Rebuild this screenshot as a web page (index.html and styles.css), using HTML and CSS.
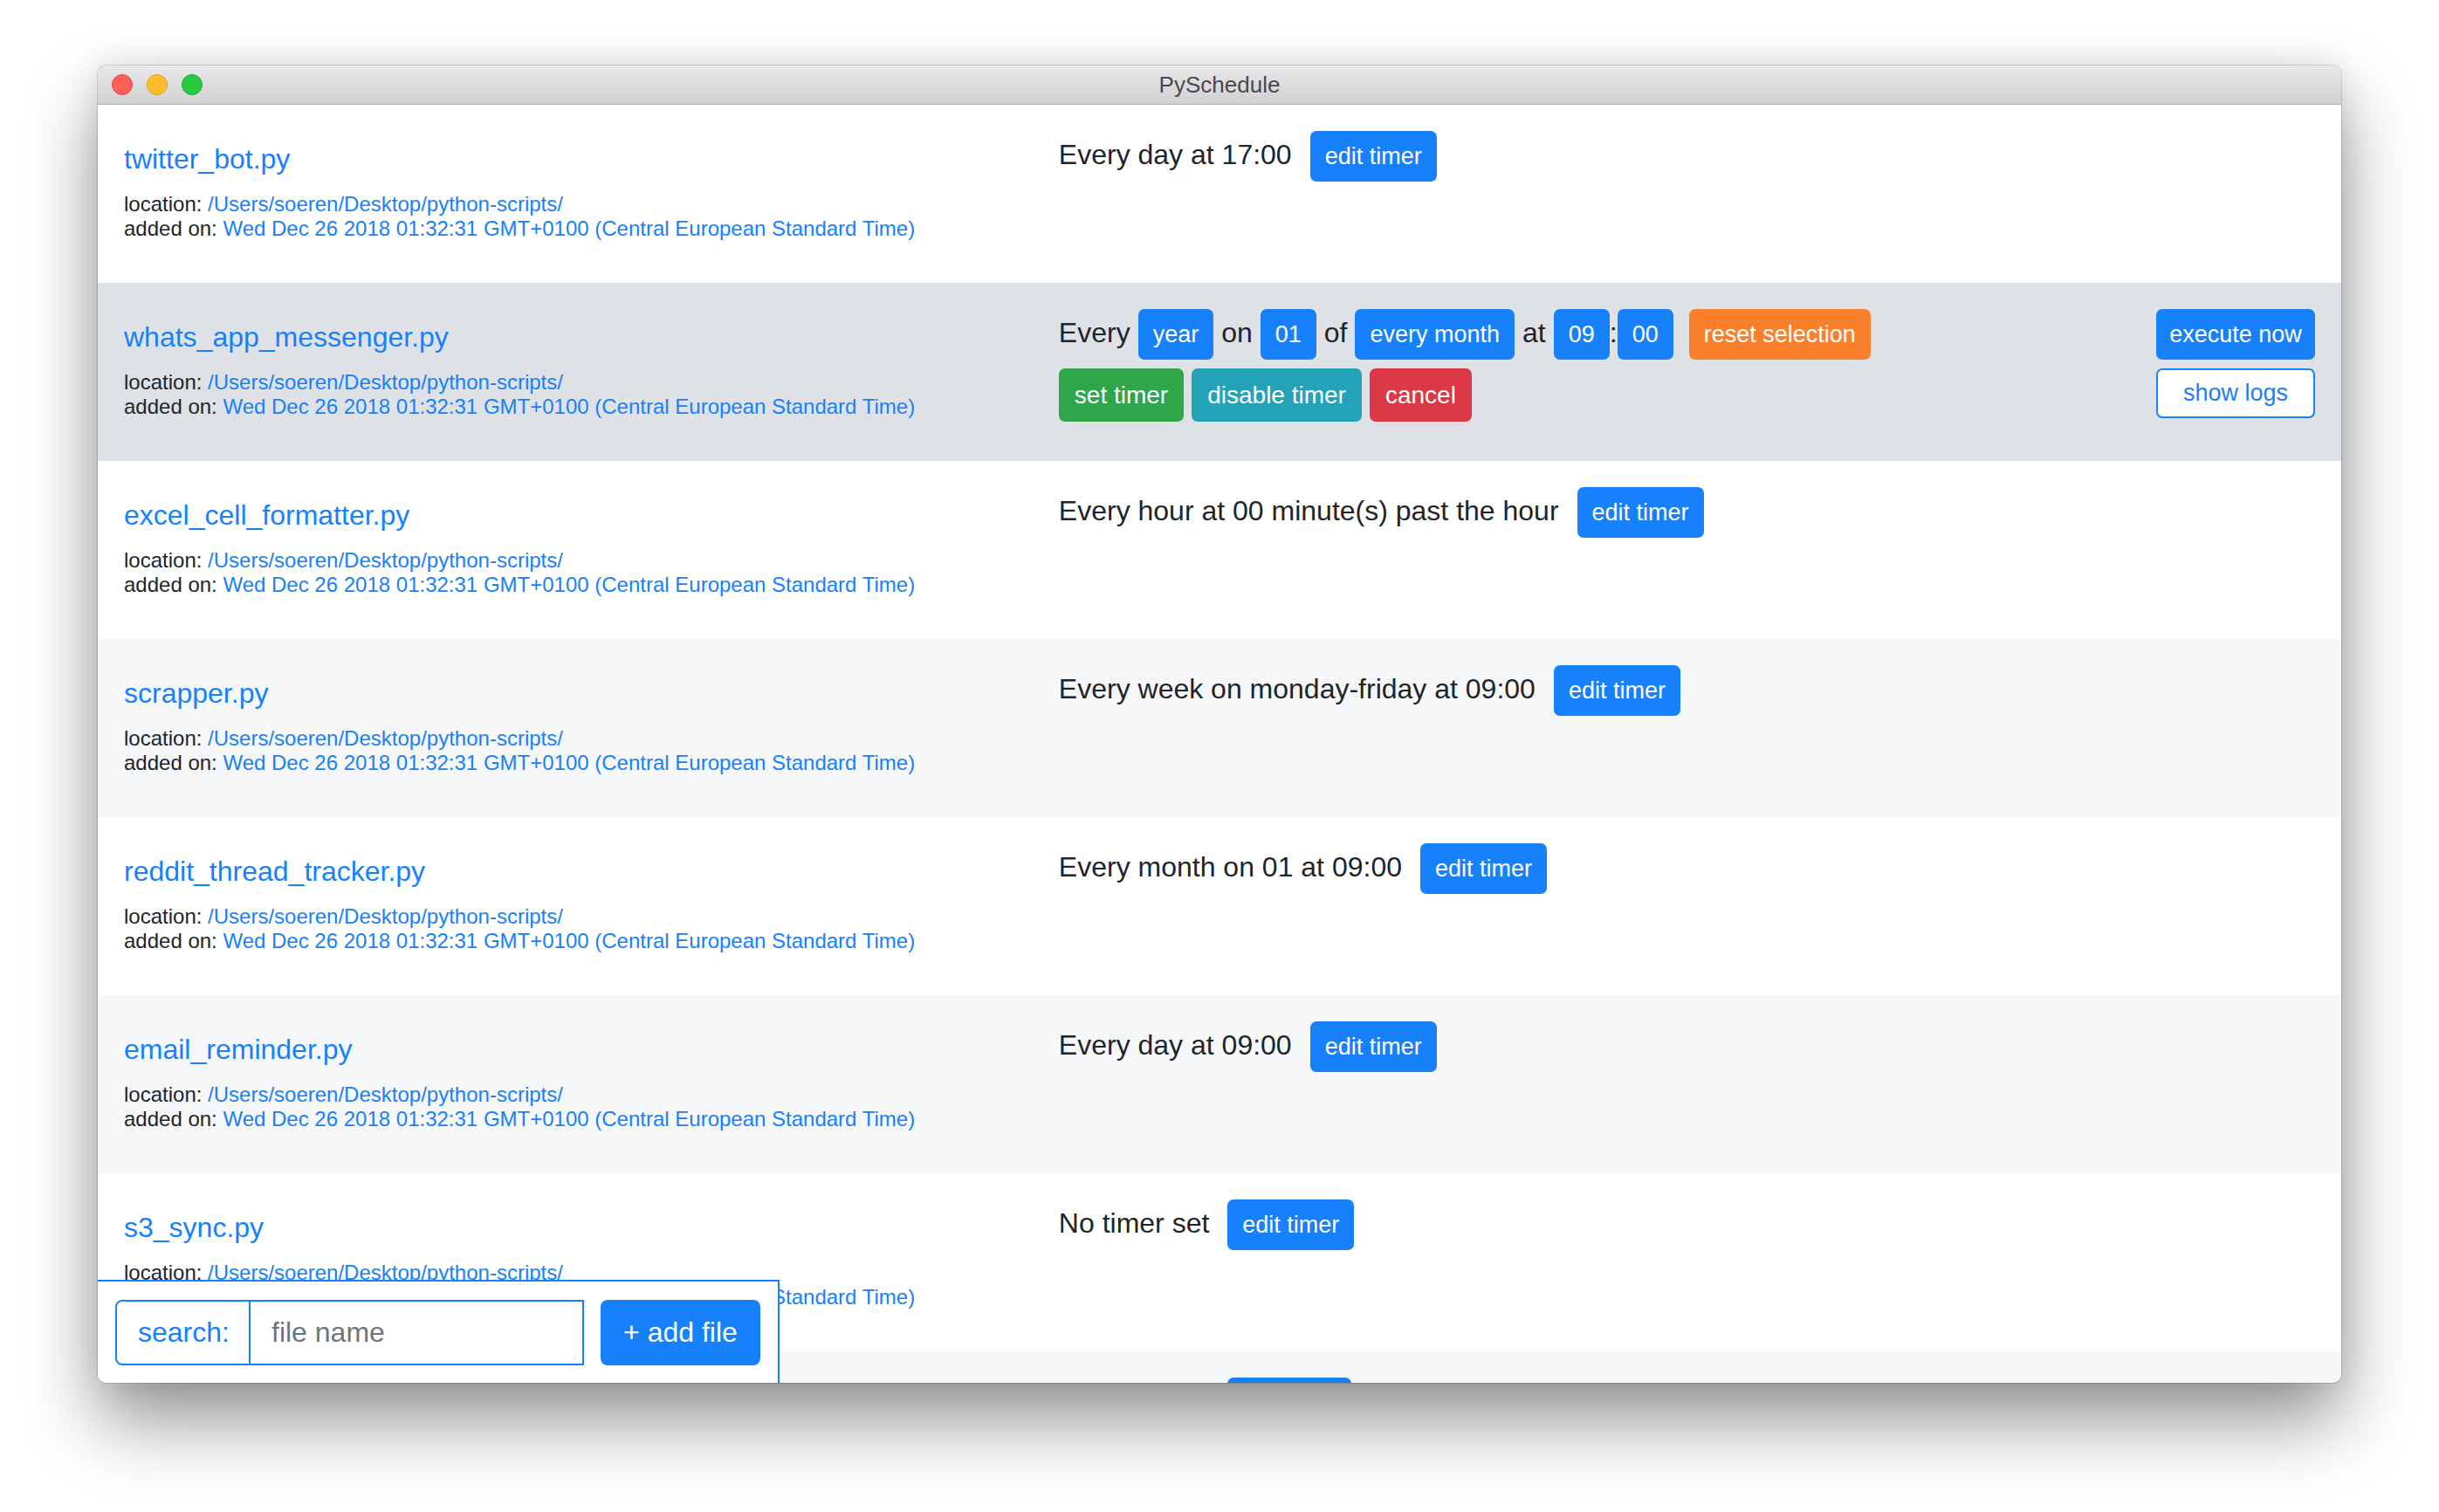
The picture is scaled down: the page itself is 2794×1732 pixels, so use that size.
FILE: index.html
```html
<html>
<head>
<link rel="stylesheet" href="styles.css">
</head>
<body>
<div class="page">
<div class="window">
  <div class="titlebar">
    <div class="lights">
      <span class="light light-close"></span>
      <span class="light light-min"></span>
      <span class="light light-max"></span>
    </div>
    <div class="title">PySchedule</div>
    <div></div>
  </div>

  <div class="content">
    <div class="file-list">

      <div class="file-row">
        <div class="file-info">
          <a class="file-name" href="#">twitter_bot.py</a>
          <div class="meta">location: <a href="#">/Users/soeren/Desktop/python-scripts/</a></div>
          <div class="meta">added on: <a href="#">Wed Dec 26 2018 01:32:31 GMT+0100 (Central European Standard Time)</a></div>
        </div>
        <div class="timer-col">
          <div class="timer-line simple">
            <span>Every day at 17:00</span>
            <button class="btn btn-primary">edit timer</button>
          </div>
        </div>
      </div>

      <div class="file-row active">
        <div class="file-info">
          <a class="file-name" href="#">whats_app_messenger.py</a>
          <div class="meta">location: <a href="#">/Users/soeren/Desktop/python-scripts/</a></div>
          <div class="meta">added on: <a href="#">Wed Dec 26 2018 01:32:31 GMT+0100 (Central European Standard Time)</a></div>
        </div>
        <div class="timer-col">
          <div class="timer">
            <div class="timer-line editor">
              <span>Every</span>
              <button class="btn btn-primary">year</button>
              <span>on</span>
              <button class="btn btn-primary">01</button>
              <span>of</span>
              <button class="btn btn-primary">every month</button>
              <span>at</span>
              <span class="clock">
                <button class="btn btn-primary">09</button><span>:</span><button class="btn btn-primary">00</button>
              </span>
              <button class="btn btn-orange reset">reset selection</button>
            </div>
            <div class="timer-line editor">
              <button class="btn btn-big btn-green">set timer</button>
              <button class="btn btn-big btn-teal">disable timer</button>
              <button class="btn btn-big btn-red">cancel</button>
            </div>
          </div>
          <div class="actions">
            <button class="btn btn-primary">execute now</button>
            <button class="btn btn-outline">show logs</button>
          </div>
        </div>
      </div>

      <div class="file-row">
        <div class="file-info">
          <a class="file-name" href="#">excel_cell_formatter.py</a>
          <div class="meta">location: <a href="#">/Users/soeren/Desktop/python-scripts/</a></div>
          <div class="meta">added on: <a href="#">Wed Dec 26 2018 01:32:31 GMT+0100 (Central European Standard Time)</a></div>
        </div>
        <div class="timer-col">
          <div class="timer-line simple">
            <span>Every hour at 00 minute(s) past the hour</span>
            <button class="btn btn-primary">edit timer</button>
          </div>
        </div>
      </div>

      <div class="file-row">
        <div class="file-info">
          <a class="file-name" href="#">scrapper.py</a>
          <div class="meta">location: <a href="#">/Users/soeren/Desktop/python-scripts/</a></div>
          <div class="meta">added on: <a href="#">Wed Dec 26 2018 01:32:31 GMT+0100 (Central European Standard Time)</a></div>
        </div>
        <div class="timer-col">
          <div class="timer-line simple">
            <span>Every week on monday-friday at 09:00</span>
            <button class="btn btn-primary">edit timer</button>
          </div>
        </div>
      </div>

      <div class="file-row">
        <div class="file-info">
          <a class="file-name" href="#">reddit_thread_tracker.py</a>
          <div class="meta">location: <a href="#">/Users/soeren/Desktop/python-scripts/</a></div>
          <div class="meta">added on: <a href="#">Wed Dec 26 2018 01:32:31 GMT+0100 (Central European Standard Time)</a></div>
        </div>
        <div class="timer-col">
          <div class="timer-line simple">
            <span>Every month on 01 at 09:00</span>
            <button class="btn btn-primary">edit timer</button>
          </div>
        </div>
      </div>

      <div class="file-row">
        <div class="file-info">
          <a class="file-name" href="#">email_reminder.py</a>
          <div class="meta">location: <a href="#">/Users/soeren/Desktop/python-scripts/</a></div>
          <div class="meta">added on: <a href="#">Wed Dec 26 2018 01:32:31 GMT+0100 (Central European Standard Time)</a></div>
        </div>
        <div class="timer-col">
          <div class="timer-line simple">
            <span>Every day at 09:00</span>
            <button class="btn btn-primary">edit timer</button>
          </div>
        </div>
      </div>

      <div class="file-row">
        <div class="file-info">
          <a class="file-name" href="#">s3_sync.py</a>
          <div class="meta">location: <a href="#">/Users/soeren/Desktop/python-scripts/</a></div>
          <div class="meta">added on: <a href="#">Wed Dec 26 2018 01:32:31 GMT+0100 (Central European Standard Time)</a></div>
        </div>
        <div class="timer-col">
          <div class="timer-line simple">
            <span>No timer set</span>
            <button class="btn btn-primary">edit timer</button>
          </div>
        </div>
      </div>

      <!-- next row, scrolled below the window edge -->
      <div class="file-row">
        <div class="file-info"></div>
        <div class="timer-col">
          <div class="timer-line simple">
            <span class="timer-gap"></span>
            <span class="btn btn-primary btn-stub"></span>
          </div>
        </div>
      </div>

    </div>

    <div class="search-panel">
      <div class="input-group">
        <span class="search-label">search:</span>
        <input class="search-input" type="text" placeholder="file name">
      </div>
      <button class="btn add-btn">+ add file</button>
    </div>
  </div>
</div>
</div>
</body>
</html>
```

FILE: styles.css
```css
* {
  box-sizing: border-box;
}

body {
  margin: 0;
  background: #fff;
  font-family: "Liberation Sans", Arial, sans-serif;
  color: #212529;
}

.page {
  padding: 75px 0 0 112px;
}

.window {
  width: 2570px;
  height: 1509px;
  display: flex;
  flex-direction: column;
  background: #fff;
  border-radius: 10px;
  overflow: hidden;
  box-shadow: 0 0 0 1px rgba(0, 0, 0, 0.13), 0 44px 84px rgba(0, 0, 0, 0.42), 0 0 36px rgba(0, 0, 0, 0.1);
}

/* title bar */
.titlebar {
  height: 45px;
  flex: none;
  display: grid;
  grid-template-columns: 1fr auto 1fr;
  align-items: center;
  background: linear-gradient(#e9e7e9, #d2d0d2);
  border-bottom: 1px solid #b2b0b2;
}

.lights {
  display: flex;
  gap: 16px;
  padding-left: 16px;
}

.light {
  width: 24px;
  height: 24px;
  border-radius: 50%;
  border: 1px solid;
}

.light-close {
  background: #fe5f57;
  border-color: #e2463f;
}

.light-min {
  background: #febc2e;
  border-color: #e1a116;
}

.light-max {
  background: #28c840;
  border-color: #1aab29;
}

.title {
  font-size: 26px;
  color: #4a4a4a;
}

/* list */
.content {
  position: relative;
  flex: 1;
  overflow: hidden;
}

.file-row {
  display: flex;
  height: 204px;
}

.file-row:nth-child(even) {
  background: #f6f7f8;
}

.file-row.active {
  background: #dee1e5;
}

.file-info {
  width: 41.6667%;
  padding: 42px 30px 0;
}

.file-name {
  display: block;
  font-size: 32px;
  line-height: 40px;
  color: #1781fb;
  text-decoration: none;
  margin-bottom: 18px;
}

.meta {
  font-size: 24px;
  line-height: 27.6px;
  white-space: nowrap;
}

.meta a {
  color: #1781fb;
  text-decoration: none;
}

.timer-col {
  flex: 1;
  display: flex;
  justify-content: space-between;
  align-items: flex-start;
  padding: 30px 30px 0;
}

.timer {
  display: flex;
  flex-direction: column;
  gap: 10px;
}

.timer-line {
  display: flex;
  align-items: baseline;
  font-size: 32px;
  line-height: 38px;
  white-space: nowrap;
}

.timer-line.simple {
  gap: 21px;
}

.timer-line.editor {
  gap: 9px;
}

.clock {
  display: flex;
  align-items: baseline;
}

.timer-gap {
  width: 172px;
}

/* buttons */
.btn {
  font-family: inherit;
  font-size: 27px;
  line-height: 38px;
  padding: 8px 15px;
  border: 2px solid transparent;
  border-radius: 7px;
  color: #fff;
  background: #1781fb;
  white-space: nowrap;
  cursor: pointer;
}

.btn-stub {
  display: block;
  width: 142px;
  height: 58px;
  align-self: flex-start;
}

.btn-big {
  font-size: 28px;
  line-height: 41px;
  padding: 8px 16px;
}

.btn-orange {
  background: #fb802c;
}

.btn-green {
  background: #30a64b;
}

.btn-teal {
  background: #23a2b8;
}

.btn-red {
  background: #dc3848;
}

.reset {
  margin-left: 9px;
}

.actions {
  display: flex;
  flex-direction: column;
  gap: 10px;
  width: 182px;
}

.actions .btn {
  width: 182px;
  padding: 8px 0;
  text-align: center;
}

.actions .btn-outline {
  background: #fff;
  color: #1781fb;
  border-color: #1781fb;
  line-height: 37px;
}

/* search panel */
.search-panel {
  position: absolute;
  left: 0;
  bottom: 0;
  width: 781px;
  height: 118px;
  display: flex;
  align-items: center;
  gap: 19px;
  padding: 0 20px;
  background: #fff;
  border-top: 2px solid #1781fb;
  border-right: 2px solid #1781fb;
}

.input-group {
  display: flex;
  height: 75px;
}

.search-label {
  width: 155px;
  display: flex;
  align-items: center;
  padding-left: 24px;
  font-size: 32px;
  color: #1781fb;
  border: 2px solid #1781fb;
  border-radius: 8px 0 0 8px;
}

.search-input {
  width: 382px;
  height: 75px;
  padding: 0 24px;
  font-family: inherit;
  font-size: 32px;
  color: #212529;
  border: 2px solid #1781fb;
  border-left: none;
  border-radius: 0;
  outline: none;
}

.search-input::placeholder {
  color: #6c757d;
}

.add-btn {
  width: 183px;
  height: 75px;
  padding: 0;
  font-size: 32px;
  line-height: 40px;
  border-radius: 8px;
}
```
